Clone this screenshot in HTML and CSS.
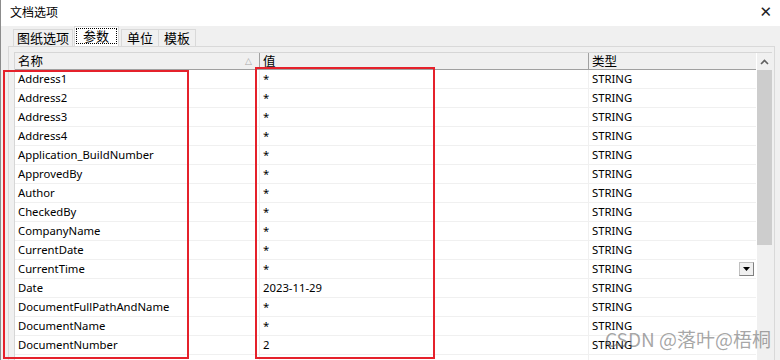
FILE: index.html
```html
<!DOCTYPE html>
<html lang="zh">
  <head>
    <meta charset="utf-8">
    <link rel="stylesheet" href="styles.css">
    <title>文档选项</title>
  </head>
  <body>
    <div class="window">
      <div class="titlebar">
        <span class="title">文档选项</span>
        <span class="close">&#x2715;</span>
      </div>
      <div class="tabs">
        <span class="tab first">图纸选项</span>
        <span class="tab active"><span class="focus">参数</span></span>
        <span class="tab">单位</span>
        <span class="tab">模板</span>
      </div>
      <div class="panel">
        <div class="list">
          <div class="grid">
            <div class="head">
              <div class="hcell c1">名称<span class="sort">&#x25B3;</span></div>
              <div class="hcell c2">值</div>
              <div class="hcell c3">类型</div>
            </div>
            <div class="row"><div class="cell c1">Address1</div><div class="cell c2">*</div><div class="cell c3">STRING</div></div>
            <div class="row"><div class="cell c1">Address2</div><div class="cell c2">*</div><div class="cell c3">STRING</div></div>
            <div class="row"><div class="cell c1">Address3</div><div class="cell c2">*</div><div class="cell c3">STRING</div></div>
            <div class="row"><div class="cell c1">Address4</div><div class="cell c2">*</div><div class="cell c3">STRING</div></div>
            <div class="row"><div class="cell c1">Application_BuildNumber</div><div class="cell c2">*</div><div class="cell c3">STRING</div></div>
            <div class="row"><div class="cell c1">ApprovedBy</div><div class="cell c2">*</div><div class="cell c3">STRING</div></div>
            <div class="row"><div class="cell c1">Author</div><div class="cell c2">*</div><div class="cell c3">STRING</div></div>
            <div class="row"><div class="cell c1">CheckedBy</div><div class="cell c2">*</div><div class="cell c3">STRING</div></div>
            <div class="row"><div class="cell c1">CompanyName</div><div class="cell c2">*</div><div class="cell c3">STRING</div></div>
            <div class="row"><div class="cell c1">CurrentDate</div><div class="cell c2">*</div><div class="cell c3">STRING</div></div>
            <div class="row"><div class="cell c1">CurrentTime</div><div class="cell c2">*</div><div class="cell c3">STRING<span class="drop"><svg width="7" height="4" viewBox="0 0 7 4"><path d="M0 0h7L3.5 4z" fill="#000"/></svg></span></div></div>
            <div class="row"><div class="cell c1">Date</div><div class="cell c2">2023-11-29</div><div class="cell c3">STRING</div></div>
            <div class="row"><div class="cell c1">DocumentFullPathAndName</div><div class="cell c2">*</div><div class="cell c3">STRING</div></div>
            <div class="row"><div class="cell c1">DocumentName</div><div class="cell c2">*</div><div class="cell c3">STRING</div></div>
            <div class="row"><div class="cell c1">DocumentNumber</div><div class="cell c2">2</div><div class="cell c3">STRING</div></div>
            <div class="row"><div class="cell c1"></div><div class="cell c2"></div><div class="cell c3"></div></div>
          </div>
          <div class="scrollbar">
            <div class="arrow"><svg width="9" height="6" viewBox="0 0 9 6"><path d="M1 5L4.5 1.5L8 5" stroke="#606060" stroke-width="1.6" fill="none"/></svg></div>
            <div class="thumb"></div>
          </div>
        </div>
      </div>
      <div class="mark mark-name"></div>
      <div class="mark mark-value"></div>
      <div class="watermark">CSDN @落叶@梧桐</div>
    </div>
  </body>
</html>
```

FILE: styles.css
```css
body{
  margin:0;
  background:#f0f0f0;
  font-family:"Noto Sans","Noto Sans CJK SC",sans-serif;
  color:#000;
}
.window{
  position:relative;
  width:780px;
  height:360px;
  overflow:hidden;
  border-left:1px solid #8c8c8c;
  box-sizing:border-box;
}
.titlebar{
  height:26px;
  background:#fff;
  display:flex;
  align-items:center;
  justify-content:space-between;
  padding:0 8px 0 9px;
}
.title{
  font-family:"Noto Sans CJK SC",sans-serif;
  font-size:12px;
  margin-top:-4px;
}
.close{
  font-size:15px;
  color:#222;
  font-family:"DejaVu Sans",sans-serif;
  margin-top:-2px;
}
.tabs{
  display:flex;
  align-items:flex-end;
  height:20px;
  margin-left:12px;
}
.tab{
  font-family:"Noto Sans CJK SC",sans-serif;
  font-size:13px;
  line-height:16px;
  padding:0 5px;
  border:1px solid #d9d9d9;
  border-bottom:none;
  background:#f0f0f0;
  margin-right:-1px;
}
.tab.first{
  padding:0 3px;
}
.tab.active{
  background:#fff;
  height:18px;
  padding:1px 1px 0;
  margin:0 2px;
  position:relative;
  z-index:1;
}
.focus{
  border:1px dotted #000;
  padding:0 7px 0 6px;
  display:inline-block;
  line-height:14px;
}
.panel{
  margin:0 5px 0 7px;
  border:1px solid #d9d9d9;
  border-bottom:none;
  height:320px;
  padding:5px 0 0 5px;
  background:#f0f0f0;
}
.list{
  display:flex;
  border-left:1px solid #d6d6d6;
  border-top:1px solid #d6d6d6;
  height:100%;
  margin-right:2px;
}
.grid{
  width:741px;
  background:#fff;
}
.head{
  display:flex;
  height:16px;
  background:#f0f0f0;
  border-bottom:1px solid #a0a0a0;
}
.hcell{
  font-family:"Noto Sans CJK SC",sans-serif;
  font-size:12.5px;
  line-height:16px;
  padding-left:3px;
  box-sizing:border-box;
  border-right:1px solid #a0a0a0;
  position:relative;
}
.sort{
  position:absolute;
  right:7px;
  top:0;
  font-size:9px;
  color:#a8a8a8;
  font-family:"DejaVu Sans",sans-serif;
}
.c1{width:245px;}
.c2{width:329px;}
.c3{width:167px;border-right:none;}
.row{
  display:flex;
  height:19px;
  border-bottom:1px solid #f0f0f0;
  box-sizing:border-box;
}
.cell{
  font-size:11.3px;
  line-height:18px;
  padding-left:3px;
  box-sizing:border-box;
  border-right:1px solid #f0f0f0;
  position:relative;
  white-space:nowrap;
}
.cell.c3{border-right:none;}
.drop{
  position:absolute;
  right:2px;
  top:2px;
  width:15px;
  height:14px;
  box-sizing:border-box;
  background:#f0f0f0;
  border:1px solid #c0c0c0;
  border-right-color:#808080;
  border-bottom-color:#808080;
  display:flex;
  align-items:center;
  justify-content:center;
}
.scrollbar{
  width:17px;
  background:#f0f0f0;
  border-left:1px solid #fff;
  display:flex;
  flex-direction:column;
  align-items:center;
}
.arrow{
  height:17px;
  display:flex;
  align-items:center;
}
.thumb{
  width:15px;
  height:175px;
  background:#cdcdcd;
}
.mark{
  position:absolute;
  border:2px solid #e5212b;
}
.mark-name{
  left:2px;
  top:70px;
  width:182px;
  height:285px;
}
.mark-value{
  left:254px;
  top:67px;
  width:176px;
  height:288px;
}
.watermark{
  position:absolute;
  left:604px;
  top:325px;
  font-family:"Noto Sans CJK SC",sans-serif;
  font-size:19px;
  color:rgba(90,90,90,0.55);
}
```
